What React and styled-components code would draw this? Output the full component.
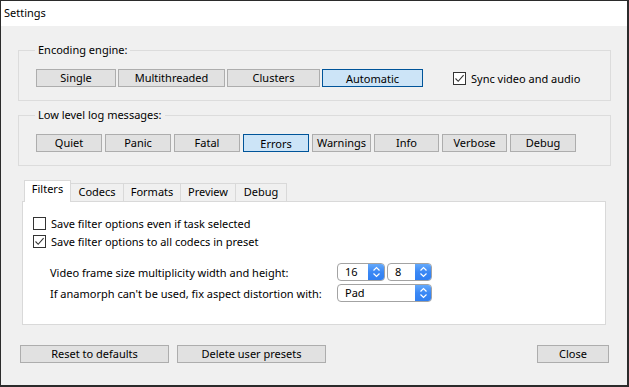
import React from "react";
import styled, { createGlobalStyle } from "styled-components";

const GlobalStyle = createGlobalStyle`
  html, body {
    margin: 0;
    padding: 0;
    background: #fff;
  }
  body {
    font-family: "Noto Sans", "Segoe UI", sans-serif;
    font-size: 11px;
    color: #000;
  }
  * {
    box-sizing: border-box;
  }
`;

const Window = styled.div`
  width: 629px;
  height: 387px;
  border: solid #2b2b2b;
  border-width: 1px 2px 2px 1px;
  background: #f0f0f0;
  display: flex;
  flex-direction: column;
`;

const TitleBar = styled.div`
  height: 25px;
  background: #fff;
  padding: 0 0 2px 3px;
  display: flex;
  align-items: center;
`;

const Body = styled.div`
  flex: 1;
  display: flex;
  flex-direction: column;
  padding: 16px 16px 0 17px;
`;

const Group = styled.fieldset`
  margin: 0 0 ${p => p.$gap || 0}px;
  border: 1px solid #dcdcdc;
  padding: 11px 16px 13px 17px;
  min-width: 0;
`;

const Legend = styled.legend`
  padding: 0 3px;
  margin-left: -1px;
  line-height: 16px;
  height: 16px;
`;

const ButtonRow = styled.div`
  display: flex;
  align-items: center;
  gap: ${p => p.$gap}px;
`;

const Button = styled.div`
  width: ${p => p.$w}px;
  height: 18px;
  border: 1px solid ${p => (p.$active ? "#005499" : "#adadad")};
  background: ${p => (p.$active ? "#cce4f7" : "#e1e1e1")};
  display: flex;
  align-items: center;
  justify-content: center;
  line-height: 16px;
  padding-top: ${p => (p.$active ? 1 : 0)}px;
`;

const CheckLabel = styled.label`
  display: flex;
  align-items: center;
  height: 18px;
  margin-left: ${p => p.$offset || 0}px;
`;

const Box = styled.span`
  width: 13px;
  height: 13px;
  border: 1px solid #333;
  background: #fff;
  margin-right: 5px;
  display: flex;
  align-items: center;
  justify-content: center;
`;

const Tabs = styled.div`
  display: flex;
  flex-direction: column;
  margin: 14px 5px 0 4px;
`;

const TabStrip = styled.div`
  display: flex;
  align-items: flex-end;
  padding-left: 2px;
  height: 22px;
  margin-bottom: -1px;
  position: relative;
  z-index: 1;
`;

const Tab = styled.div`
  width: ${p => p.$w}px;
  height: ${p => (p.$active ? 22 : 18)}px;
  margin-bottom: ${p => (p.$active ? 0 : 1)}px;
  margin-left: ${p => (p.$first ? 0 : -1)}px;
  border: 1px solid #d9d9d9;
  border-bottom: none;
  background: ${p => (p.$active ? "#fff" : "#f0f0f0")};
  text-align: center;
  line-height: ${p => (p.$active ? 16 : 15)}px;
`;

const Panel = styled.div`
  height: 124px;
  background: #fff;
  border: 1px solid #d9d9d9;
  padding: 12px 0 0 10px;
`;

const Form = styled.div`
  display: grid;
  grid-template-columns: 287px auto;
  row-gap: 3px;
  margin: 13px 0 0 17px;
  align-items: center;
`;

const Controls = styled.div`
  display: flex;
  gap: 2px;
`;

const Spin = styled.div`
  width: ${p => p.$w}px;
  height: 18px;
  border: 1px solid #a3a3a3;
  border-radius: 4px;
  background: #fff;
  display: flex;
  overflow: hidden;
`;

const SpinValue = styled.span`
  flex: 1;
  padding-left: 7px;
  line-height: 16px;
`;

const SpinArrows = styled.span`
  width: 17px;
  margin: -1px -1px -1px 0;
  background: linear-gradient(#69adfc, #3b88f5 50%, #2f7ef0);
  display: flex;
  align-items: center;
  justify-content: center;
`;

const Footer = styled.div`
  display: flex;
  margin-top: 20px;
  padding: 0 2px;
  gap: 8px;
`;

const Spacer = styled.div`
  flex: 1;
`;

const Check = () => (
  <svg width="11" height="11" viewBox="0 0 11 11">
    <path d="M1.5 5.5 L4.2 8.3 L9.6 2.2" fill="none" stroke="#333" strokeWidth="1.1" />
  </svg>
);

const Chevrons = () => (
  <svg width="9" height="12" viewBox="0 0 9 12">
    <path d="M1.5 4.5 L4.5 1.5 L7.5 4.5 M1.5 7.5 L4.5 10.5 L7.5 7.5" fill="none" stroke="#fff" strokeWidth="1.2" />
  </svg>
);

const CheckBox = ({ checked, label, offset }) => (
  <CheckLabel $offset={offset}>
    <Box>{checked && <Check />}</Box>
    {label}
  </CheckLabel>
);

const SpinBox = ({ value, w }) => (
  <Spin $w={w}>
    <SpinValue>{value}</SpinValue>
    <SpinArrows>
      <Chevrons />
    </SpinArrows>
  </Spin>
);

const engines = [
  { name: "Single", w: 80 },
  { name: "Multithreaded", w: 107 },
  { name: "Clusters", w: 93 },
  { name: "Automatic", w: 101, active: true },
];

const levels = [
  { name: "Quiet", w: 66 },
  { name: "Panic", w: 66 },
  { name: "Fatal", w: 66 },
  { name: "Errors", w: 66, active: true },
  { name: "Warnings", w: 59 },
  { name: "Info", w: 65 },
  { name: "Verbose", w: 65 },
  { name: "Debug", w: 66 },
];

const tabs = [
  { name: "Filters", w: 47, active: true },
  { name: "Codecs", w: 54 },
  { name: "Formats", w: 58 },
  { name: "Preview", w: 56 },
  { name: "Debug", w: 52 },
];

export default function App() {
  return (
    <>
      <GlobalStyle />
      <Window>
        <TitleBar>Settings</TitleBar>
        <Body>
          <Group $gap={6}>
            <Legend>Encoding engine:</Legend>
            <ButtonRow $gap={2}>
              {engines.map(e => (
                <Button key={e.name} $w={e.w} $active={e.active}>
                  {e.name}
                </Button>
              ))}
              <CheckBox checked label="Sync video and audio" offset={28} />
            </ButtonRow>
          </Group>
          <Group>
            <Legend>Low level log messages:</Legend>
            <ButtonRow $gap={3}>
              {levels.map(l => (
                <Button key={l.name} $w={l.w} $active={l.active}>
                  {l.name}
                </Button>
              ))}
            </ButtonRow>
          </Group>
          <Tabs>
            <TabStrip>
              {tabs.map((t, i) => (
                <Tab key={t.name} $w={t.w} $active={t.active} $first={i === 0}>
                  {t.name}
                </Tab>
              ))}
            </TabStrip>
            <Panel>
              <CheckBox label="Save filter options even if task selected" />
              <CheckBox checked label="Save filter options to all codecs in preset" />
              <Form>
                <span>Video frame size multiplicity width and height:</span>
                <Controls>
                  <SpinBox value="16" w={48} />
                  <SpinBox value="8" w={45} />
                </Controls>
                <span>If anamorph can't be used, fix aspect distortion with:</span>
                <Controls>
                  <SpinBox value="Pad" w={95} />
                </Controls>
              </Form>
            </Panel>
          </Tabs>
          <Footer>
            <Button $w={149}>Reset to defaults</Button>
            <Button $w={149}>Delete user presets</Button>
            <Spacer />
            <Button $w={72}>Close</Button>
          </Footer>
        </Body>
      </Window>
    </>
  );
}
